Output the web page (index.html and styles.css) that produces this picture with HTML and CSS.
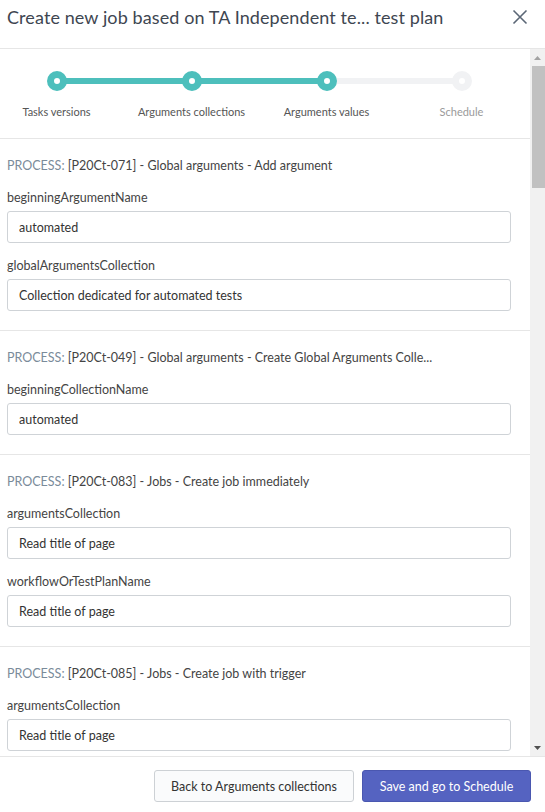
FILE: index.html
```html
<!DOCTYPE html>
<html>
<head>
<meta charset="utf-8">
<link rel="stylesheet" href="styles.css">
</head>
<body>
<div class="modal">
  <header class="modal-header">
    <h1 class="modal-title">Create new job based on TA Independent te... test plan</h1>
    <button class="close-btn" aria-label="Close">
      <svg width="16" height="16" viewBox="0 0 16 16"><path d="M1.5 1.5 L14.5 14.5 M14.5 1.5 L1.5 14.5" stroke="#5b6776" stroke-width="1.6" fill="none"/></svg>
    </button>
  </header>
  <div class="modal-main">
    <div class="modal-body">
      <div class="stepper">
        <div class="step done"><span class="dot"></span><span class="step-label">Tasks versions</span></div>
        <div class="step done"><span class="dot"></span><span class="step-label">Arguments collections</span></div>
        <div class="step done"><span class="dot"></span><span class="step-label">Arguments values</span></div>
        <div class="step todo"><span class="dot"></span><span class="step-label">Schedule</span></div>
      </div>

      <section class="process">
        <div class="process-title"><span class="kw">PROCESS:</span> [P20Ct-071] - Global arguments - Add argument</div>
        <div class="field"><label>beginningArgumentName</label><input type="text" value="automated"></div>
        <div class="field"><label>globalArgumentsCollection</label><input type="text" value="Collection dedicated for automated tests"></div>
      </section>
      <section class="process">
        <div class="process-title"><span class="kw">PROCESS:</span> [P20Ct-049] - Global arguments - Create Global Arguments Colle...</div>
        <div class="field"><label>beginningCollectionName</label><input type="text" value="automated"></div>
      </section>
      <section class="process">
        <div class="process-title"><span class="kw">PROCESS:</span> [P20Ct-083] - Jobs - Create job immediately</div>
        <div class="field"><label>argumentsCollection</label><input type="text" value="Read title of page"></div>
        <div class="field"><label>workflowOrTestPlanName</label><input type="text" value="Read title of page"></div>
      </section>
      <section class="process">
        <div class="process-title"><span class="kw">PROCESS:</span> [P20Ct-085] - Jobs - Create job with trigger</div>
        <div class="field"><label>argumentsCollection</label><input type="text" value="Read title of page"></div>
      </section>
    </div>
    <div class="scrollbar" aria-hidden="true">
      <div class="sb-btn">
        <svg width="7" height="4" viewBox="0 0 7 4"><path d="M0 4 L3.5 0 L7 4 Z" fill="#a3a3a3"/></svg>
      </div>
      <div class="sb-track"><div class="sb-thumb"></div></div>
      <div class="sb-btn">
        <svg width="7" height="4" viewBox="0 0 7 4"><path d="M0 0 L7 0 L3.5 4 Z" fill="#505050"/></svg>
      </div>
    </div>
  </div>
  <footer class="modal-footer">
    <button class="btn btn-default">Back to Arguments collections</button>
    <button class="btn btn-primary">Save and go to Schedule</button>
  </footer>
</div>
</body>
</html>
```
FILE: styles.css
```css
* { box-sizing: border-box; }
html, body { margin: 0; padding: 0; height: 100%; }
body {
  font-family: "Lato", "Noto Sans", sans-serif;
  color: #444;
  background: #fff;
  overflow: hidden;
}
.modal {
  display: flex;
  flex-direction: column;
  height: 812px;
  width: 545px;
}
.modal-header {
  height: 49px;
  flex: none;
  display: flex;
  align-items: flex-start;
  justify-content: space-between;
  border-bottom: 1px solid #e6e6e6;
  padding: 6px 17px 0 7px;
}
.modal-title {
  margin: 0;
  font-size: 18px;
  font-weight: 400;
  line-height: 22px;
  color: #3e4651;
  letter-spacing: 0.1px;
}
.close-btn {
  border: 0;
  background: none;
  padding: 0;
  margin-top: 3px;
  width: 16px;
  height: 16px;
  display: flex;
}
.modal-main {
  flex: 1;
  min-height: 0;
  display: flex;
}
.modal-body {
  flex: 1;
  min-width: 0;
  overflow: hidden;
}
.scrollbar {
  flex: none;
  width: 15px;
  background: #f1f1f1;
  display: flex;
  flex-direction: column;
}
.sb-btn {
  flex: none;
  height: 17px;
  display: flex;
  align-items: center;
  justify-content: center;
}
.sb-track {
  flex: 1;
  padding-left: 2px;
}
.sb-thumb {
  height: 122px;
  background: #c1c1c1;
}
.stepper {
  display: grid;
  grid-template-columns: repeat(4, 135px);
  margin-left: -11px;
  padding: 22px 0 0;
  height: 90px;
  border-bottom: 1px solid #e6e6e6;
}
.step {
  position: relative;
  display: flex;
  flex-direction: column;
  align-items: center;
}
.step + .step::before {
  content: "";
  position: absolute;
  top: 7px;
  left: -50%;
  width: 100%;
  height: 6px;
  background: #4dbfbc;
  z-index: 0;
}
.step.todo::before { background: #f1f2f4; }
.dot {
  position: relative;
  z-index: 1;
  width: 20px;
  height: 20px;
  border-radius: 50%;
  background: #fff;
  border: 7px solid #4dbfbc;
}
.step.todo .dot { border-color: #f1f2f4; }
.step-label {
  margin-top: 14px;
  font-size: 11px;
  line-height: 14px;
  color: #555;
  white-space: nowrap;
}
.step.todo .step-label { color: #9a9a9a; }
.process {
  padding: 19px 19px 19px 7px;
  border-bottom: 1px solid #e6e6e6;
}
.process-title {
  font-size: 12.5px;
  line-height: 16px;
  color: #444;
  margin-bottom: 16px;
  white-space: nowrap;
}
.kw { color: #7a8b9a; }
.field + .field { margin-top: 15px; }
.field label {
  display: block;
  font-size: 12.5px;
  line-height: 16px;
  color: #444;
  margin-bottom: 5px;
}
.field input {
  display: block;
  width: 100%;
  height: 32px;
  border: 1px solid #cfd3d7;
  border-radius: 3px;
  padding: 0 11px;
  font-family: inherit;
  font-size: 12.5px;
  color: #333;
  background: #fff;
  outline: none;
}
.modal-footer {
  flex: none;
  height: 56px;
  border-top: 1px solid #e6e6e6;
  display: flex;
  justify-content: flex-end;
  align-items: flex-start;
  gap: 8px;
  padding: 13px 14px 0 0;
}
.btn {
  height: 32px;
  border-radius: 3px;
  font-family: inherit;
  font-size: 12.5px;
  padding: 0 15px;
  cursor: pointer;
}
.btn-default {
  width: 200px;
  background: #fafbfc;
  border: 1px solid #cdd1d5;
  color: #333;
}
.btn-primary {
  width: 169px;
  background: #5563c1;
  border: 1px solid #4a57b0;
  color: #fff;
}
```
